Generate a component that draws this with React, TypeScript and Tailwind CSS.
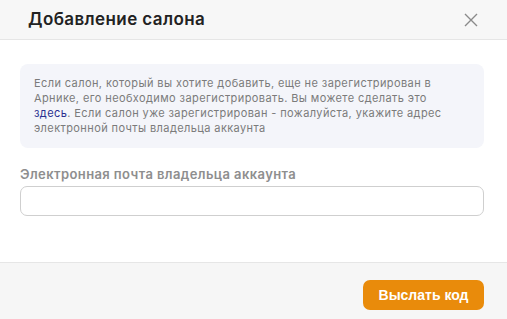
import React from "react";

const App: React.FC = () => {
  return (
    <div className="flex h-[319px] w-[507px] flex-col bg-white font-['Inter',sans-serif]">
      <header className="flex h-[40px] items-center justify-between border-b border-[#e6e6e6] bg-[#f7f7f7] pl-[28px] pr-[29px]">
        <h1 className="text-[17px] font-semibold tracking-[0.4px] text-[#222]">Добавление салона</h1>
        <button className="text-[#8a8a8a]">
          <svg width="14" height="14" viewBox="0 0 14 14" fill="none" stroke="currentColor" strokeWidth="1.4">
            <path d="M1 1L13 13M13 1L1 13" />
          </svg>
        </button>
      </header>
      <main className="flex flex-1 flex-col pl-[20px] pr-[23px] pt-[24px]">
        <div className="rounded-[8px] bg-[#f4f5fa] px-[14px] py-[12px] text-[11px] leading-[15px] tracking-[0.4px] text-[#7b7b7b]">
          Если салон, который вы хотите добавить, еще не зарегистрирован в
          <br />
          Арнике, его необходимо зарегистрировать. Вы можете сделать это
          <br />
          <a className="text-[#2a2f8f]">здесь</a>. Если салон уже зарегистрирован - пожалуйста, укажите адрес
          <br />
          электронной почты владельца аккаунта
        </div>
        <label className="mt-[17px] text-[13px] font-semibold tracking-[0.4px] text-[#8e8e8e]">
          Электронная почта владельца аккаунта
        </label>
        <input className="mt-[1px] h-[30px] w-full rounded-[7px] border border-[#cfcfcf] bg-white px-2 text-[13px] outline-none" />
      </main>
      <footer className="flex h-[57px] items-start justify-end border-t border-[#e6e6e6] bg-[#f6f6f6] pr-[23px] pt-[17px]">
        <button className="h-[30px] w-[121px] rounded-[7px] bg-[#e98b0b] font-['Liberation_Sans',sans-serif] text-[14px] font-bold text-white">
          Выслать код
        </button>
      </footer>
    </div>
  );
};

export default App;
